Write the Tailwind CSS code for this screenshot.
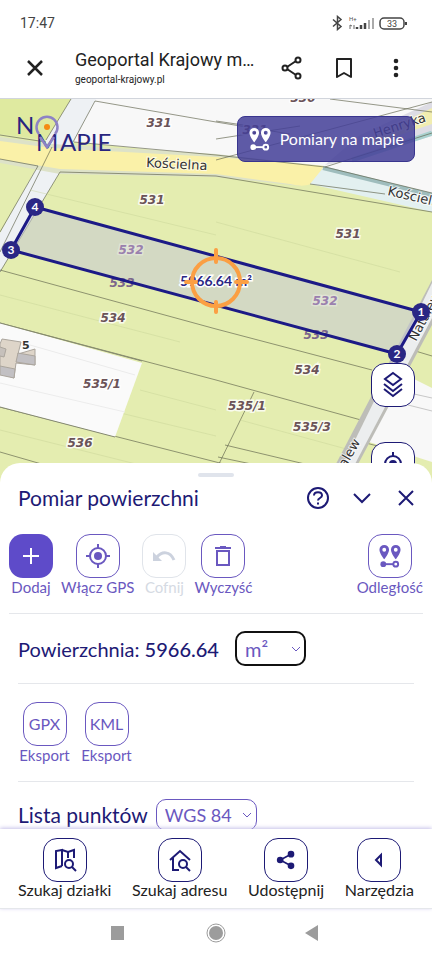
<!DOCTYPE html>
<html lang="pl">
  <head>
    <meta charset="UTF-8" />
    <meta name="viewport" content="width=device-width, initial-scale=1.0" />
    <title>Geoportal Krajowy mapa</title>
    <script src="https://cdn.jsdelivr.net/npm/@tailwindcss/browser@4"></script>
  </head>
  <body class="flex h-screen flex-col overflow-hidden bg-white font-['Lato',sans-serif] text-[#1d1a75]">
    <!-- status bar -->
    <div class="flex h-[46px] shrink-0 items-center justify-between pl-5 pr-6 font-['Roboto',sans-serif] text-[#444]">
      <span class="text-sm">17:47</span>
      <svg class="h-4 w-[76px]" viewBox="0 0 76 16" fill="none">
        <path d="M1 4.500 9 11.500 5.500 14.500V1.500L9 4.500 1 11.500" stroke="#444" stroke-width="1.500" />
        <text x="17" y="6" font-size="6" fill="#555">H+</text>
        <path d="M18 14v-4l2 1M22 10v4" stroke="#666" />
        <path d="M25 12v2M29 10v4M33 8v6" stroke="#444" stroke-width="2.500" />
        <path d="M37 5v9M41 3v11" stroke="#aaa" stroke-width="2" />
        <rect x="48" y="3" width="24" height="11" rx="4" stroke="#444" stroke-width="1.500" />
        <path d="M74 7v3" stroke="#444" stroke-width="2" />
        <text x="60" y="12" font-size="9" fill="#444" text-anchor="middle">33</text>
      </svg>
    </div>

    <!-- browser bar -->
    <header class="flex h-[53px] shrink-0 items-center border-b border-gray-300 pb-2 pl-[23px] pr-6 font-['Roboto',sans-serif] text-[#222]">
      <button type="button" aria-label="Zamknij kartę" class="shrink-0">
        <svg class="size-6" viewBox="0 0 24 24" stroke="currentColor" stroke-width="2.500"><path d="M5 5 19 19M19 5 5 19" /></svg>
      </button>
      <div class="ml-7 min-w-0 flex-1">
        <div class="truncate text-lg leading-6">Geoportal Krajowy m...</div>
        <div class="text-[10px] leading-4">geoportal-krajowy.pl</div>
      </div>
      <div class="flex shrink-0 items-center gap-7 pl-6">
        <button type="button" aria-label="Udostępnij stronę">
          <svg class="size-6" viewBox="0 0 24 24" fill="none" stroke="currentColor" stroke-width="2"><circle cx="5" cy="12" r="2.500" /><circle cx="18" cy="4" r="2.500" /><circle cx="18" cy="20" r="2.500" /><path d="m7 11 9-6M7 13l9 6" /></svg>
        </button>
        <button type="button" aria-label="Dodaj zakładkę">
          <svg class="size-6" viewBox="0 0 24 24" fill="none" stroke="currentColor" stroke-width="2"><path d="M5 3h14v18l-7-4-7 4z" stroke-linejoin="round" /></svg>
        </button>
        <button type="button" aria-label="Menu">
          <svg class="size-6" viewBox="0 0 24 24" fill="currentColor"><circle cx="12" cy="5" r="2.300" /><circle cx="12" cy="12" r="2.300" /><circle cx="12" cy="19" r="2.300" /></svg>
        </button>
      </div>
    </header>

    <!-- map -->
    <section class="relative h-[40vh] shrink-0 overflow-hidden bg-[#e4edb0]">
      <svg class="absolute inset-0 h-full w-full" viewBox="0 99 432 384" preserveAspectRatio="xMidYMin slice">
        <rect y="99" width="432" height="384" fill="#e4edb0" />
        <path d="M0 99H71L46 140 0 134Z" fill="#dfeaa0" />
        <path d="M94 99H432V195L320 168 216 156 74 142Z" fill="#f8f8f8" />
        <path d="M71 99H96L72 145 60 172 0 272V233L38 165 46 140Z" fill="#eef1f4" />
        <path d="M0 137 52 144 216 154 325 166 300 186 216 177 60 174 0 163Z" fill="#dde2c8" />
        <path d="M0 141 52 148 216 157 324 166 313 183Q304 188 290 184L216 174 60 169 36 165 0 159Z" fill="#faf1a8" />
        <path d="M323 168 432 193V212L310 184Z" fill="#e3f0f0" />
        <path d="M323 168 432 195" stroke="#9fbdbd" stroke-width="4" />
        <path d="M325 165 360 135 432 102V136L352 160Z" fill="#dddce4" />
        <path d="M370 138 432 108V124L370 145Z" fill="#f1edb0" />
        <path d="M352 160 432 133" stroke="#a9d1cf" stroke-width="5" />
        <g fill="none" stroke="#5f634b" stroke-opacity=".65">
          <path d="M95 101 216 122 290 134M95 101 73 142M71 99 46 140M0 135 46 142M74 142 216 155 325 167 432 193M0 159 38 166M38 166 0 232M60 172 0 272M60 172 216 176 432 212M310 184 385 194M325 167 432 133M216 121 250 126M216 160 432 102M216 139 300 126M330 99 432 112M52 147 0 252" />
          <path d="M0 270 216 329 372 370M0 323 216 380 361 420M0 407 216 462 250 471M0 452 45 465M254 392 216 470M225 445 330 470M218 457 280 470M412 350 432 356M405 392 432 399M362 442 432 460" />
        </g>
        <g fill="none" stroke="#c3cf94" stroke-opacity=".4">
          <path d="M30 190 216 235M0 295 180 342M140 390 216 410M0 384 216 436M0 430 160 470M216 222 400 272M240 420 350 450" />
        </g>
        <path d="M0 323 142 363 115 437 0 407Z" fill="#fafafa" />
        <path d="M0 383 125 412M30 345 135 375" stroke="#ececec" />
        <path d="M0 323 142 361M0 407 115 437" stroke="#858970" />
        <!-- buildings -->
        <g stroke="#aba59d">
          <path d="M2 339 21 342 18 354 35 349V365L16 363 14 378 0 373V344Z" fill="#ded5c9" />
          <path d="M0 366 15 369 14 378 0 375ZM18 353 35 356V365L16 362Z" fill="#c2c0c3" />
          <path d="M0 347 6 349 4 357 0 356" fill="#c6c0bb" />
        </g>
        <!-- side road -->
        <path d="M396 370 432 388V462L366 441Z" fill="#f8f8f8" />
        <path d="M396 390 432 398M408 405 432 411" stroke="#c7c7c7" />
        <path d="M432 280V325L348 483H326Z" fill="#bdbdb8" />
        <path d="M432 283V318L345 483H334Z" fill="#eceeef" />

        <path d="M35 207 421 312 397 354 11 250Z" fill="#c5c8d4" fill-opacity=".55" />

        <g font-family="DejaVu Sans" font-size="12" font-weight="bold" font-style="italic" text-anchor="middle" fill="#6b5358" stroke="#fff" stroke-opacity=".8" stroke-width="3" paint-order="stroke">
          <text x="159" y="127">331</text>
          <text x="255" y="134">331</text>
          <text x="303" y="102">330</text>
          <text x="152" y="204">531</text>
          <text x="348" y="238">531</text>
          <text x="113" y="322">534</text>
          <text x="307" y="374">534</text>
          <text x="102" y="388">535/1</text>
          <text x="247" y="410">535/1</text>
          <text x="312" y="431">535/3</text>
          <text x="80" y="447">536</text>
          <g fill="#9a80ae" stroke-opacity=".3"><text x="131" y="254">532</text><text x="325" y="305">532</text></g>
          <g fill="#7b668b" stroke="none"><text x="122" y="287">533</text><text x="316" y="339">533</text></g>
        </g>
        <g font-family="DejaVu Sans" font-size="13" fill="#333" stroke="#fff" stroke-opacity=".7" stroke-width="2" paint-order="stroke">
          <text transform="translate(146 167) rotate(3)">Kościelna</text>
          <text transform="translate(387 195) rotate(13)">Kościelna</text>
          <text transform="translate(375 138) rotate(-18)">Henryka</text>
          <text transform="translate(416 342) rotate(-62)">Natalew</text>
          <text transform="translate(334 488) rotate(-60)">Natalew</text>
          <text x="22" y="349" font-size="11" font-weight="bold">5</text>
        </g>
        <path d="M35 207 421 312 397 354 11 250Z" fill="none" stroke="#1c1a86" stroke-width="3" stroke-linejoin="round" />

        <g fill="#2a2785"><circle cx="35" cy="207" r="9" /><circle cx="11" cy="250" r="9" /><circle cx="397" cy="354" r="9" /><circle cx="421" cy="312" r="9" /></g>
        <g fill="#fff" font-family="Lato" font-size="12" font-weight="bold" text-anchor="middle">
          <text x="35" y="211">4</text><text x="11" y="254">3</text><text x="397" y="358">2</text><text x="421" y="316">1</text>
        </g>
        <text x="216" y="286" font-family="Lato" font-size="14" font-weight="bold" text-anchor="middle" fill="#2a2785" stroke="#fff" stroke-width="3" paint-order="stroke">5966.64 m²</text>
        <g fill="none" stroke="#fb9f43" stroke-width="4" stroke-linecap="round">
          <circle cx="216" cy="282" r="24" />
          <path d="M216 250V262M216 302V312M186 282H196M236 282H247" />
        </g>

        <!-- logo -->
        <g font-family="Lato" font-size="24" fill="#28257f">
          <text x="16" y="134">N</text>
          <text x="36" y="151">M</text>
          <text x="60" y="151">APIE</text>
        </g>
        <path d="M39 134A10.500 10.500 0 1 1 55 134" fill="none" stroke="#8d83c5" stroke-width="2.500" />
        <path d="M40 137 47 147 54 137" fill="none" stroke="#8d83c5" stroke-width="2.500" />
        <circle cx="47" cy="127" r="3" fill="#f58b12" />
      </svg>

      <button type="button" class="absolute right-[17px] top-[17px] flex h-[46px] items-center gap-2 rounded-lg border border-[#39358e] bg-[#433e98]/85 px-[10px] text-base text-white">
        <svg class="size-6" viewBox="2 1 24 25" fill="none"><path fill="currentColor" fill-rule="evenodd" d="M8 2a5 5 0 0 0-5 5c0 4 5 10 5 10s5-6 5-10a5 5 0 0 0-5-5Zm0 3a2 2 0 1 1 0 4 2 2 0 0 1 0-4ZM20 2a5 5 0 0 0-5 5c0 4 5 10 5 10s5-6 5-10a5 5 0 0 0-5-5Zm0 3a2 2 0 1 1 0 4 2 2 0 0 1 0-4Z" /><circle cx="7" cy="22" r="3" fill="currentColor" /><path d="M8 22h10" stroke="currentColor" stroke-width="2" /><circle cx="20" cy="22" r="2.500" stroke="currentColor" stroke-width="2" /></svg>
        Pomiary na mapie
      </button>

      <div class="absolute right-[17px] top-[264px] flex flex-col gap-[35px]">
        <button type="button" aria-label="Warstwy" class="grid size-11 place-items-center rounded-[14px] border border-[#1d1a75] bg-white">
          <svg class="size-7" viewBox="0 0 28 28" fill="none" stroke="currentColor" stroke-width="2"><path d="m14 2 8 6-8 6-8-6zM5 13l9 7 9-7M5 18l9 7 9-7" /></svg>
        </button>
        <button type="button" aria-label="Moja lokalizacja" class="grid size-11 place-items-center rounded-[14px] border border-[#1d1a75] bg-white">
          <svg class="size-6" viewBox="0 0 24 24" fill="none" stroke="currentColor" stroke-width="2"><circle cx="12" cy="12" r="8" /><circle cx="12" cy="12" r="4" fill="currentColor" stroke="none" /><path d="M12 0v4M12 20v4M0 12h4M20 12h4" /></svg>
        </button>
      </div>
    </section>

    <!-- measurement panel -->
    <main class="relative -mt-5 min-h-0 flex-1 overflow-hidden rounded-t-[20px] bg-white pt-[10px]">
      <div class="mx-auto h-1 w-9 rounded-full bg-[#e0e4ec]"></div>
      <div class="flex h-[42px] items-center justify-between pl-[18px] pr-[14px]">
        <h1 class="text-[21px]">Pomiar powierzchni</h1>
        <div class="flex gap-5">
          <button type="button" aria-label="Pomoc">
            <svg class="size-6" viewBox="0 0 24 24" fill="none" stroke="currentColor" stroke-width="2"><circle cx="12" cy="12" r="10" /><path d="M8 9.500C8 5 16 5 16 9.500c0 2.500-4 2.500-4 5M12 16.500v2" /></svg>
          </button>
          <button type="button" aria-label="Zwiń">
            <svg class="size-6" viewBox="0 0 24 24" fill="none" stroke="currentColor" stroke-width="2"><path d="m4 8 8 8 8-8" /></svg>
          </button>
          <button type="button" aria-label="Zamknij">
            <svg class="size-6" viewBox="0 0 24 24" stroke="currentColor" stroke-width="2"><path d="m5 5 14 14M19 5 5 19" /></svg>
          </button>
        </div>
      </div>

      <div class="mx-[9px] flex gap-2 border-b border-gray-200 pb-[17px] pt-[15px] text-[15px] leading-[18px] text-[#6a58c0]">
        <button type="button" class="flex flex-col items-center">
          <span class="grid size-11 place-items-center rounded-[14px] bg-[#5e4bc9] text-white">
            <svg class="size-6" viewBox="0 0 24 24" stroke="currentColor" stroke-width="2"><path d="M12 4v16M4 12h16" /></svg>
          </span>
          Dodaj
        </button>
        <button type="button" class="flex flex-col items-center">
          <span class="grid size-11 place-items-center rounded-[14px] border border-[#6a58c0]">
            <svg class="size-6" viewBox="0 0 24 24" fill="none" stroke="currentColor" stroke-width="2"><circle cx="12" cy="12" r="8" /><circle cx="12" cy="12" r="4" fill="currentColor" stroke="none" /><path d="M12 0v4M12 20v4M0 12h4M20 12h4" /></svg>
          </span>
          Włącz GPS
        </button>
        <button type="button" disabled class="flex flex-col items-center text-[#d5dae3]">
          <span class="grid size-11 place-items-center rounded-[14px] border border-[#e0e4ea] text-[#ccd2de]">
            <svg class="size-6" viewBox="0 0 24 24" fill="none" stroke="currentColor" stroke-width="3"><path d="M5 13c5-6 13-6 17 3" /><path d="M1 8v9h9z" fill="currentColor" stroke="none" /></svg>
          </span>
          Cofnij
        </button>
        <button type="button" class="flex flex-col items-center">
          <span class="grid size-11 place-items-center rounded-[14px] border border-[#6a58c0]">
            <svg class="size-6" viewBox="0 0 24 24" fill="none" stroke="currentColor" stroke-width="2"><path d="M6 7h12v14H6zM4 4h16M9 3h6" /></svg>
          </span>
          Wyczyść
        </button>
        <button type="button" class="ml-auto flex flex-col items-center">
          <span class="grid size-11 place-items-center rounded-[14px] border border-[#6a58c0]">
            <svg class="size-6" viewBox="2 1 24 25" fill="none"><path fill="currentColor" fill-rule="evenodd" d="M8 2a5 5 0 0 0-5 5c0 4 5 10 5 10s5-6 5-10a5 5 0 0 0-5-5Zm0 3a2 2 0 1 1 0 4 2 2 0 0 1 0-4ZM20 2a5 5 0 0 0-5 5c0 4 5 10 5 10s5-6 5-10a5 5 0 0 0-5-5Zm0 3a2 2 0 1 1 0 4 2 2 0 0 1 0-4Z" /><circle cx="7" cy="22" r="3" fill="currentColor" /><path d="M8 22h10" stroke="currentColor" stroke-width="2" /><circle cx="20" cy="22" r="2.500" stroke="currentColor" stroke-width="2" /></svg>
          </span>
          Odległość
        </button>
      </div>

      <div class="mx-[18px] flex h-[70px] items-center border-b border-gray-200">
        <label for="unit" class="text-xl">Powierzchnia: <span class="font-medium">5966.64</span></label>
        <div class="relative ml-4">
          <select id="unit" class="h-[35px] w-[71px] appearance-none rounded-[10px] border-2 border-[#111] bg-white pl-2 text-xl leading-6 text-[#6a58c0]">
            <option>m²</option>
            <option>ar</option>
            <option>ha</option>
          </select>
          <svg class="pointer-events-none absolute right-1 top-3 size-3" viewBox="0 0 12 12" fill="none" stroke="#6a58c0"><path d="m2 4 4 4 4-4" /></svg>
        </div>
      </div>

      <div class="mx-[18px] flex gap-[9px] border-b border-gray-200 pb-[17px] pt-[18px] text-[15px] leading-[18px] text-[#6a58c0]">
        <button type="button" class="flex w-[53px] flex-col items-center">
          <span class="grid size-11 place-items-center rounded-[14px] border border-[#6a58c0] text-base">GPX</span>
          Eksport
        </button>
        <button type="button" class="flex w-[53px] flex-col items-center">
          <span class="grid size-11 place-items-center rounded-[14px] border border-[#6a58c0] text-base">KML</span>
          Eksport
        </button>
      </div>

      <div class="mx-[18px] flex items-center gap-2 pt-[17px]">
        <label for="crs" class="text-[21px]">Lista punktów</label>
        <div class="relative">
          <select id="crs" class="h-8 w-[101px] appearance-none rounded-[10px] border border-[#6a58c0] bg-white pl-2 text-lg leading-6 text-[#6a58c0]">
            <option>WGS 84</option>
            <option>PUWG 1992</option>
          </select>
          <svg class="pointer-events-none absolute right-1 top-[10px] size-3" viewBox="0 0 12 12" fill="none" stroke="#6a58c0"><path d="m2 4 4 4 4-4" /></svg>
        </div>
      </div>
    </main>

    <!-- bottom navigation -->
    <nav class="relative flex h-20 shrink-0 justify-between border-b border-gray-200 bg-white px-[18px] pt-[9px] text-base leading-4 text-[#222] shadow-[0_-1px_4px_#c5bfe8]">
      <a href="#dzialki" class="flex flex-col items-center">
        <span class="grid size-11 place-items-center rounded-[14px] border border-[#1d1a75] text-[#1d1a75]">
          <svg class="size-6" viewBox="0 0 24 24" fill="none" stroke="currentColor" stroke-width="2"><path d="M9 18 3 20V3l6-1v16M9 2l6 2 6-2v8M15 4v6" /><circle cx="16" cy="16" r="4" /><path d="m19 19 4 4" /></svg>
        </span>
        Szukaj działki
      </a>
      <a href="#adres" class="flex flex-col items-center">
        <span class="grid size-11 place-items-center rounded-[14px] border border-[#1d1a75] text-[#1d1a75]">
          <svg class="size-6" viewBox="0 0 24 24" fill="none" stroke="currentColor" stroke-width="2"><path d="m2 12 10-9 10 9M5 10v12h6" /><circle cx="15" cy="16" r="4" /><path d="m18 19 4 4" /></svg>
        </span>
        Szukaj adresu
      </a>
      <a href="#udostepnij" class="flex flex-col items-center">
        <span class="grid size-11 place-items-center rounded-[14px] border border-[#1d1a75] text-[#1d1a75]">
          <svg class="size-5" viewBox="0 0 24 24" fill="currentColor" stroke="currentColor" stroke-width="2"><circle cx="5" cy="12" r="3" /><circle cx="18" cy="5" r="3" /><circle cx="18" cy="19" r="3" /><path d="m5 12 13-7M5 12l13 7" /></svg>
        </span>
        Udostępnij
      </a>
      <a href="#narzedzia" class="flex flex-col items-center">
        <span class="grid size-11 place-items-center rounded-[14px] border border-[#1d1a75] text-[#1d1a75]">
          <svg class="size-5" viewBox="0 0 20 20" fill="none" stroke="currentColor" stroke-width="2"><path d="M12 5v10l-5-5z" /></svg>
        </span>
        Narzędzia
      </a>
    </nav>

    <!-- system buttons -->
    <footer class="flex h-[51px] shrink-0 items-center justify-center gap-[77px] pb-1 text-[#9c9c9c]">
      <button type="button" aria-label="Ostatnie">
        <svg class="size-5" viewBox="0 0 20 20" fill="currentColor"><path d="M2 3h13v14H2z" /></svg>
      </button>
      <button type="button" aria-label="Ekran główny">
        <svg class="size-5" viewBox="0 0 20 20" fill="currentColor"><circle cx="10" cy="10" r="7" /><circle cx="10" cy="10" r="9" fill="none" stroke="currentColor" stroke-width="1" /></svg>
      </button>
      <button type="button" aria-label="Wstecz">
        <svg class="size-5" viewBox="0 0 20 20" fill="currentColor"><path d="M15 2v16L2 10z" /></svg>
      </button>
    </footer>
  </body>
</html>
